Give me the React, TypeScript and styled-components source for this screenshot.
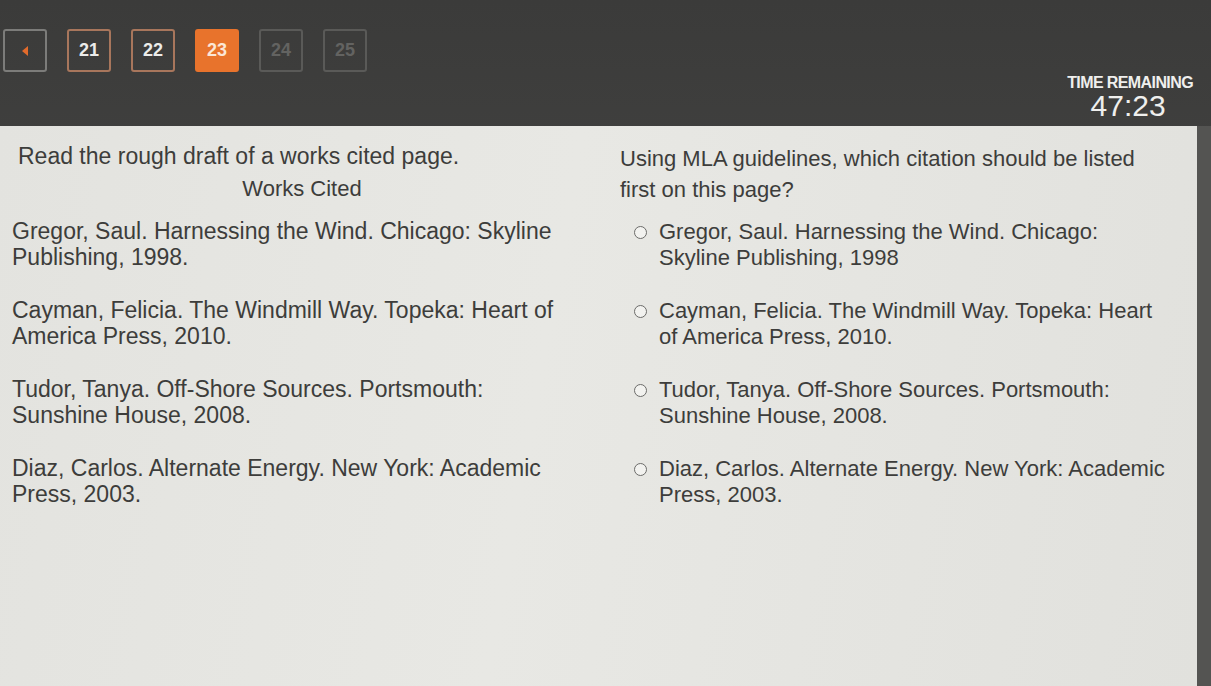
import React from "react";
import styled, { createGlobalStyle } from "styled-components";

const Global = createGlobalStyle`
  html, body { margin: 0; padding: 0; }
  body {
    width: 1211px;
    height: 686px;
    overflow: hidden;
    background: #424240;
    font-family: "Liberation Sans", Arial, sans-serif;
  }
  #root { height: 100%; }
`;

const Screen = styled.div`
  display: flex;
  flex-direction: column;
  width: 1211px;
  height: 686px;
  background: linear-gradient(180deg, #3b3b3a 0%, #4e4e4c 100%);
`;

const Header = styled.header`
  display: flex;
  justify-content: space-between;
  height: 126px;
  padding: 0 18px 0 3px;
  box-sizing: border-box;
  flex-shrink: 0;
`;

const Nav = styled.nav`
  display: flex;
  gap: 20px;
  margin-top: 29px;
  align-self: flex-start;
`;

type Variant = "back" | "visited" | "current" | "locked";

const NavButton = styled.div<{ $variant: Variant }>`
  width: 44px;
  height: 43px;
  box-sizing: border-box;
  border-radius: 3px;
  display: flex;
  align-items: center;
  justify-content: center;
  font-weight: 700;
  font-size: 18px;
  border: 2px solid
    ${(p) =>
      p.$variant === "back"
        ? "#7c7c7a"
        : p.$variant === "visited"
        ? "#a8765c"
        : p.$variant === "current"
        ? "#e8732c"
        : "#5a5a58"};
  background: ${(p) => (p.$variant === "current" ? "#e8732c" : "transparent")};
  color: ${(p) =>
    p.$variant === "locked" ? "#636361" : p.$variant === "current" ? "#fbe6d6" : "#ececea"};
`;

const BackArrow = styled.span`
  width: 0;
  height: 0;
  border-top: 5px solid transparent;
  border-bottom: 5px solid transparent;
  border-right: 6px solid #e26b2c;
`;

const Timer = styled.div`
  align-self: flex-end;
  display: flex;
  flex-direction: column;
  align-items: center;
  padding-bottom: 5px;
  color: #efefed;
`;

const TimerLabel = styled.div`
  font-size: 16px;
  font-weight: 700;
  letter-spacing: -0.6px;
  text-transform: uppercase;
  line-height: 16px;
`;

const TimerValue = styled.div`
  font-size: 30px;
  line-height: 30px;
  margin-right: 4px;
`;

const Body = styled.div`
  flex: 1;
  display: flex;
`;

const Panel = styled.main`
  width: 1197px;
  box-sizing: border-box;
  background: linear-gradient(100deg, #e3e3df 0%, #e8e8e4 45%, #e1e1dd 100%);
  display: grid;
  grid-template-columns: 608px 1fr;
  padding: 17px 0 0 0;
  color: #3d3d3b;
  font-size: 23px;
  line-height: 26px;
`;

const Edge = styled.div`
  flex: 1;
  background: #545452;
`;

const LeftCol = styled.section`
  display: flex;
  flex-direction: column;
  padding-left: 12px;
`;

const Intro = styled.p`
  margin: 0 0 7px 6px;
`;

const CitedTitle = styled.h2`
  margin: 0 0 16px 0;
  font-size: 22px;
  font-weight: 400;
  text-align: center;
  width: 580px;
`;

const Entries = styled.div`
  display: flex;
  flex-direction: column;
  gap: 27px;
`;

const Entry = styled.p`
  margin: 0;
  white-space: nowrap;
`;

const RightCol = styled.section`
  display: flex;
  flex-direction: column;
  padding-left: 12px;
  font-size: 22px;
`;

const Question = styled.p`
  margin: 0 0 14px 0;
  line-height: 31px;
  white-space: nowrap;
`;

const Options = styled.div`
  display: flex;
  flex-direction: column;
  gap: 27px;
`;

const Option = styled.label`
  display: flex;
  align-items: flex-start;
  gap: 12px;
  padding-left: 14px;
`;

const Radio = styled.span`
  width: 13px;
  height: 13px;
  margin-top: 7px;
  border-radius: 50%;
  border: 1.5px solid #6b6b69;
  box-sizing: border-box;
  flex-shrink: 0;
  background: #f2f2ef;
`;

const OptionText = styled.span`
  white-space: nowrap;
`;

const citations: string[][] = [
  ["Gregor, Saul. Harnessing the Wind. Chicago: Skyline", "Publishing, 1998."],
  ["Cayman, Felicia. The Windmill Way. Topeka: Heart of", "America Press, 2010."],
  ["Tudor, Tanya. Off-Shore Sources. Portsmouth:", "Sunshine House, 2008."],
  ["Diaz, Carlos. Alternate Energy. New York: Academic", "Press, 2003."],
];

const options: string[][] = [
  ["Gregor, Saul. Harnessing the Wind. Chicago:", "Skyline Publishing, 1998"],
  ["Cayman, Felicia. The Windmill Way. Topeka: Heart", "of America Press, 2010."],
  ["Tudor, Tanya. Off-Shore Sources. Portsmouth:", "Sunshine House, 2008."],
  ["Diaz, Carlos. Alternate Energy. New York: Academic", "Press, 2003."],
];

const navItems: { label: string; variant: Variant }[] = [
  { label: "21", variant: "visited" },
  { label: "22", variant: "visited" },
  { label: "23", variant: "current" },
  { label: "24", variant: "locked" },
  { label: "25", variant: "locked" },
];

const Lines = ({ lines }: { lines: string[] }) => (
  <>
    {lines.map((l, i) => (
      <React.Fragment key={i}>
        {i > 0 && <br />}
        {l}
      </React.Fragment>
    ))}
  </>
);

export default function App() {
  return (
    <>
      <Global />
      <Screen>
        <Header>
          <Nav>
            <NavButton $variant="back">
              <BackArrow />
            </NavButton>
            {navItems.map((n) => (
              <NavButton key={n.label} $variant={n.variant}>
                {n.label}
              </NavButton>
            ))}
          </Nav>
          <Timer>
            <TimerLabel>Time Remaining</TimerLabel>
            <TimerValue>47:23</TimerValue>
          </Timer>
        </Header>
        <Body>
          <Panel>
            <LeftCol>
              <Intro>Read the rough draft of a works cited page.</Intro>
              <CitedTitle>Works Cited</CitedTitle>
              <Entries>
                {citations.map((c) => (
                  <Entry key={c[0]}>
                    <Lines lines={c} />
                  </Entry>
                ))}
              </Entries>
            </LeftCol>
            <RightCol>
              <Question>
                <Lines
                  lines={[
                    "Using MLA guidelines, which citation should be listed",
                    "first on this page?",
                  ]}
                />
              </Question>
              <Options>
                {options.map((o) => (
                  <Option key={o[0]}>
                    <Radio />
                    <OptionText>
                      <Lines lines={o} />
                    </OptionText>
                  </Option>
                ))}
              </Options>
            </RightCol>
          </Panel>
          <Edge />
        </Body>
      </Screen>
    </>
  );
}
